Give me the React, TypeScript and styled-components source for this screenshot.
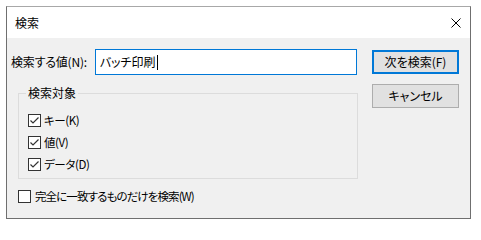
import styled, { createGlobalStyle } from "styled-components";

const GlobalStyle = createGlobalStyle`
  body {
    margin: 0;
    background: #ffffff;
    font-family: "Noto Sans CJK JP", sans-serif;
    font-size: 12px;
    line-height: 16px;
    color: #000000;
    font-feature-settings: "palt";
  }
`;

const CheckBox = ({ checked }: { checked?: boolean }) => (
  <Box>
    {checked && (
      <svg width="11" height="11" viewBox="0 0 11 11">
        <polyline points="1.5,5.5 4,8 9.5,2.5" fill="none" stroke="#333" strokeWidth="1.2" />
      </svg>
    )}
  </Box>
);

const targets = ["キー(K)", "値(V)", "データ(D)"];

const App = () => (
  <>
    <GlobalStyle />
    <Window>
      <TitleBar>
        <Title>検索</Title>
        <CloseIcon width="10" height="10" viewBox="0 0 10 10">
          <path d="M0.5 0.5 L9.5 9.5 M9.5 0.5 L0.5 9.5" stroke="#000" strokeWidth="1" />
        </CloseIcon>
      </TitleBar>
      <Body>
        <MainColumn>
          <SearchRow>
            <FieldLabel>検索する値(N):</FieldLabel>
            <TextBox>
              バッチ印刷
              <Caret />
            </TextBox>
          </SearchRow>
          <Group>
            <Legend>検索対象</Legend>
            <CheckList>
              {targets.map((t) => (
                <CheckRow key={t}>
                  <CheckBox checked />
                  <CheckLabel>{t}</CheckLabel>
                </CheckRow>
              ))}
            </CheckList>
          </Group>
          <ExactRow>
            <CheckBox />
            <CheckLabel $wide>完全に一致するものだけを検索(W)</CheckLabel>
          </ExactRow>
        </MainColumn>
        <ButtonColumn>
          <Button $default>次を検索(F)</Button>
          <Button>キャンセル</Button>
        </ButtonColumn>
      </Body>
    </Window>
  </>
);

export default App;

const Window = styled.div`
  margin: 6px 0 0 6px;
  width: 465px;
  height: 213px;
  box-sizing: border-box;
  border: 1px solid #6f6f6f;
  border-top-color: #a8a8a8;
  background: #f0f0f0;
  display: flex;
  flex-direction: column;
`;

const TitleBar = styled.div`
  height: 31px;
  flex-shrink: 0;
  background: #ffffff;
  display: flex;
  align-items: center;
  justify-content: space-between;
  padding: 0 9px 0 8px;
`;

const Title = styled.span`
  font-size: 12px;
  margin-top: 1px;
`;

const CloseIcon = styled.svg`
  display: block;
`;

const Body = styled.div`
  display: flex;
  padding: 11px 11px 0 4px;
`;

const MainColumn = styled.div`
  width: 346px;
  display: flex;
  flex-direction: column;
`;

const SearchRow = styled.div`
  display: flex;
  align-items: center;
`;

const FieldLabel = styled.span`
  width: 84px;
  letter-spacing: -0.2px;
`;

const TextBox = styled.div`
  width: 263px;
  height: 26px;
  box-sizing: border-box;
  border: 1px solid #0078d7;
  background: #ffffff;
  padding-left: 4px;
  display: flex;
  align-items: center;
`;

const Caret = styled.span`
  width: 1px;
  height: 15px;
  background: #000000;
  margin-left: 1px;
`;

const Group = styled.fieldset`
  margin: 10px 0 0 7px;
  width: 340px;
  box-sizing: border-box;
  border: 1px solid #dcdcdc;
  padding: 13px 0 7px 9px;
  min-inline-size: 0;
`;

const Legend = styled.legend`
  padding: 0 2px;
  margin-left: -2px;
  line-height: 16px;
`;

const CheckList = styled.div`
  display: flex;
  flex-direction: column;
  gap: 9px;
`;

const CheckRow = styled.div`
  display: flex;
  align-items: center;
  height: 13px;
`;

const ExactRow = styled(CheckRow)`
  margin: 11px 0 0 7px;
`;

const Box = styled.span`
  width: 13px;
  height: 13px;
  box-sizing: border-box;
  border: 1px solid #333333;
  background: #ffffff;
  display: flex;
  align-items: center;
  justify-content: center;
  flex-shrink: 0;
`;

const CheckLabel = styled.span<{ $wide?: boolean }>`
  margin-left: ${({ $wide }) => ($wide ? "4px" : "3px")};
  font-size: 11.5px;
  line-height: 13px;
  letter-spacing: ${({ $wide }) => ($wide ? "-0.9px" : "-0.4px")};
`;

const ButtonColumn = styled.div`
  margin-left: auto;
  padding-top: 1px;
  display: flex;
  flex-direction: column;
  gap: 10px;
`;

const Button = styled.div<{ $default?: boolean }>`
  width: 87px;
  height: 24px;
  box-sizing: border-box;
  background: #e1e1e1;
  border: ${({ $default }) => ($default ? "2px solid #0078d7" : "1px solid #adadad")};
  display: flex;
  align-items: center;
  justify-content: center;
`;
